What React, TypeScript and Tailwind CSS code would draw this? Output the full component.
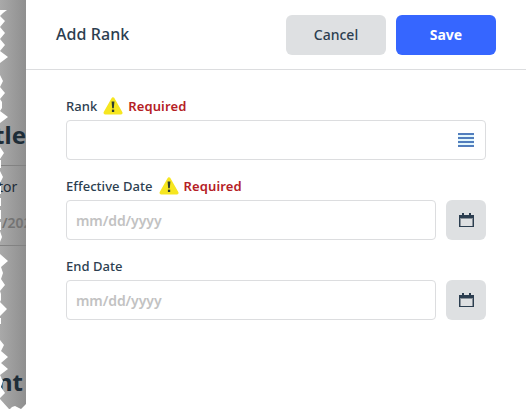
import React from 'react'
import clsx from 'clsx'

function WarningIcon() {
  return (
    <svg className="h-[18px] w-5 shrink-0" viewBox="0 0 20 18">
      <path d="M10 2 L17.8 15.8 H2.2 Z" fill="#f6e620" stroke="#f6e620" strokeWidth="3.4" strokeLinejoin="round" />
      <path d="M8.6 4.4 H11.4 L10.8 11.2 H9.2 Z" fill="#2c3c31" />
      <rect x="8.9" y="12.6" width="2.3" height="2.4" fill="#2c3c31" />
    </svg>
  )
}

function ListIcon() {
  return (
    <svg className="h-[15px] w-4" viewBox="0 0 16 15" shapeRendering="crispEdges">
      <rect y="1" width="16" height="13" fill="#e3f7fd" />
      <path d="M0 0H16V2H0ZM0 4H16V6H0ZM0 8H16V10H0ZM0 12H16V14H0Z" fill="#527dbd" />
    </svg>
  )
}

function CalendarIcon() {
  return (
    <svg className="h-[15px] w-[15px]" viewBox="0 0 15 15" shapeRendering="crispEdges">
      <path d="M3 0H5V2H10V0H12V2H15V14H0V2H3Z" fill="#2c3e50" />
      <rect x="1" y="5" width="13" height="8" fill="#899199" />
      <rect x="2" y="6" width="11" height="7" fill="#dee0e2" />
    </svg>
  )
}

function TornEdge() {
  return (
    <svg className="absolute inset-0 h-full w-[26px]" viewBox="0 0 26 409">
      <path
        d="M0 10H7L3 13L2 14L0 16L5 21L0 27L5 33L0 39L5 45L0 51L8 57L0 63ZM0 75L3 81L0 87L5 93L0 99L2 102V108L0 111L8 117L0 123ZM0 147L4 153L0 159ZM0 160H1V168H0ZM0 171L3 177L0 183ZM0 186H1V194H0ZM0 198H1V206H0ZM0 210H1V219H0ZM0 222H1V230H0ZM0 231L2 237L0 242ZM0 254L8 261L1 267L3 273L1 279L5 285L0 291L1 294V300L0 302L7 309L0 316ZM0 318H1V324H0ZM0 340L4 345L1 351L8 357L1 363L8 369L0 375L3 381L1 387L5 393L0 398ZM0 399L9 409H0ZM10 409L12 407L15 406L21 409L26 404V409Z"
        fill="#fff"
      />
    </svg>
  )
}

function Backdrop() {
  return (
    <div className="relative w-[26px] shrink-0 overflow-hidden bg-linear-to-r from-[#a9a9a9] to-[#8f8f8f] whitespace-nowrap text-[#1e2d38]">
      <div className="flex h-[166px] items-end justify-end border-b border-[#828282] pb-[14px] text-2xl font-bold">
        <span className="leading-8">tle</span>
      </div>
      <div className="flex h-[80px] flex-col border-b border-[#828282] pt-[11px]">
        <span className="-ml-[2px] text-[14px] leading-5">tor</span>
        <span className="mt-4 ml-[2px] text-[14px] leading-5 font-semibold text-[#737373]">/2023</span>
      </div>
      <div className="mt-[120px] -ml-[3px] text-2xl leading-8 font-bold">nt</div>
      <TornEdge />
    </div>
  )
}

function Label({ text, required }: { text: string; required?: boolean }) {
  return (
    <div className="flex h-7 items-center text-[13px] font-medium tracking-[0.04px] text-[#2c3e50]">
      <span className="pt-[2px]">{text}</span>
      {required && (
        <>
          <span className="mr-[5px] ml-[6px] flex">
            <WarningIcon />
          </span>
          <span className="pt-[2px] font-semibold tracking-[0.12px] text-[#b52025]">Required</span>
        </>
      )}
    </div>
  )
}

function DateField({ label, required }: { label: string; required?: boolean }) {
  return (
    <div className="h-20">
      <Label text={label} required={required} />
      <div className="flex gap-[10px]">
        <input
          className="h-10 w-[370px] rounded-[4px] border border-[#dcdddf] px-[9px] text-[14px] font-semibold tracking-[-0.08px] placeholder:text-[#c2c2c2]"
          placeholder="mm/dd/yyyy"
        />
        <button className="flex h-10 w-10 items-center justify-center rounded-[6px] bg-[#dee0e2]" aria-label={label}>
          <CalendarIcon />
        </button>
      </div>
    </div>
  )
}

function Button({ children, primary }: { children: React.ReactNode; primary?: boolean }) {
  return (
    <button
      className={clsx(
        'h-10 w-[100px] rounded-[6px] text-[14px]',
        primary ? 'bg-[#3666ff] font-bold text-white' : 'bg-[#dee0e2] font-medium text-[#2c3e50]',
      )}
    >
      {children}
    </button>
  )
}

export default function App() {
  return (
    <div className="flex h-[409px] w-[526px] overflow-hidden bg-white font-['Noto_Sans','Open_Sans',sans-serif]">
      <Backdrop />
      <main className="flex-1">
        <header className="flex h-[70px] items-center justify-between border-b border-[#dcdddf] pr-[30px] pl-[30px]">
          <h1 className="pb-[2px] text-base font-medium tracking-[0.08px] text-[#2c3e50]">Add Rank</h1>
          <div className="flex gap-[10px]">
            <Button>Cancel</Button>
            <Button primary>Save</Button>
          </div>
        </header>
        <section className="px-10 pt-[22px]">
          <div className="h-20">
            <Label text="Rank" required />
            <div className="flex h-10 items-center justify-end rounded-[4px] border border-[#dcdddf] pr-[11px]">
              <ListIcon />
            </div>
          </div>
          <DateField label="Effective Date" required />
          <DateField label="End Date" />
        </section>
      </main>
    </div>
  )
}
